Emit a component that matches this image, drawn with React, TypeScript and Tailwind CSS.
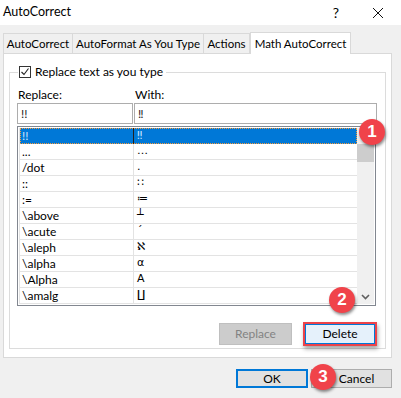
import React from 'react';

const rows: { k: string; v: string }[] = [
  { k: '!!', v: '‼' },
  { k: '...', v: '…' },
  { k: '/dot', v: '.' },
  { k: '::', v: '∷' },
  { k: ':=', v: '≔' },
  { k: '\\above', v: '┴' },
  { k: '\\acute', v: '´' },
  { k: '\\aleph', v: 'ℵ' },
  { k: '\\alpha', v: 'α' },
  { k: '\\Alpha', v: 'Α' },
  { k: '\\amalg', v: '∐' },
];

const Badge = ({ n, className }: { n: number; className: string }) => (
  <div
    className={`absolute w-[26px] h-[26px] rounded-full bg-[#f0434a] text-white text-[17px] font-bold flex items-center justify-center shadow-[1px_2px_3px_rgba(0,0,0,0.45)] ${className}`}
    style={{ fontFamily: '"Liberation Sans", Arial, sans-serif' }}
  >
    {n}
  </div>
);

export default function App() {
  return (
    <div
      className="relative w-[401px] h-[398px] bg-[#f0f0f0] overflow-hidden text-[12px] text-black"
      style={{ fontFamily: 'Lato, "Noto Sans", sans-serif' }}
    >
      {/* title bar */}
      <div className="h-[25px] bg-white flex items-center pl-[3px] pr-[17px]">
        <span className="text-[12.5px] flex-1">AutoCorrect</span>
        <span className="text-[14px] mr-[33px]">?</span>
        <svg width="12" height="12" viewBox="0 0 12 12">
          <path d="M1 1 L11 11 M11 1 L1 11" stroke="#111" strokeWidth="1" />
        </svg>
      </div>

      {/* tabs */}
      <div className="flex items-end pl-[3px] mt-[7px] h-[21px] text-[11.5px] whitespace-nowrap">
        <div className="w-[70px] h-[20px] border border-[#d9d9d9] border-b-0 bg-[#f0f0f0] flex items-center justify-center">AutoCorrect</div>
        <div className="w-[131px] h-[20px] border border-[#d9d9d9] border-l-0 border-b-0 bg-[#f0f0f0] flex items-center justify-center">AutoFormat As You Type</div>
        <div className="w-[46px] h-[20px] border border-[#d9d9d9] border-l-0 border-b-0 bg-[#f0f0f0] flex items-center justify-center">Actions</div>
        <div className="relative z-10 w-[101px] h-[22px] -mb-px border border-[#d9d9d9] border-b-0 bg-white flex items-center justify-center">Math AutoCorrect</div>
      </div>

      {/* panel */}
      <div className="ml-[3px] w-[389px] h-[305px] bg-white border border-[#d9d9d9] pt-[18px] px-[5px]">
        <div className="relative h-[277px] border border-[#dcdcdc] px-[7px]">
          <div className="absolute -top-[10px] left-[8px] flex items-center bg-white pr-[3px] pl-[1px]">
            <div className="w-[12px] h-[12px] border border-[#333] flex items-center justify-center mr-[4px]">
              <svg width="10" height="10" viewBox="0 0 10 10">
                <path d="M1.5 5 L4 7.5 L8.5 1.5" stroke="#222" strokeWidth="1.1" fill="none" />
              </svg>
            </div>
            <span>Replace text as you type</span>
          </div>

          <div className="flex mt-[14px] h-[16px] items-center">
            <div className="w-[118px] pl-[1px]">Replace:</div>
            <div>With:</div>
          </div>

          <div className="flex gap-[1px]">
            <div className="w-[116px] h-[21px] border border-[#adadad] flex items-center pl-[3px] text-[#1a1a1a]">!!</div>
            <div className="w-[243px] h-[21px] border border-[#adadad] flex items-center pl-[3px] text-[#1a1a1a]">‼</div>
          </div>

          {/* list */}
          <div className="mt-[2px] w-[359px] h-[180px] border border-[#828790] flex p-px">
            <div className="w-[338px] border-l border-[#e3e3e3]">
              {rows.map((r, i) => (
                <div
                  key={r.k}
                  className={`flex h-[16px] items-center ${
                    i === 0 ? 'bg-[#0078d7] text-[#cfe6ff] outline-1 outline-dotted outline-[#f59a3a] -outline-offset-1' : 'border-b border-[#e3e3e3]'
                  }`}
                >
                  <div className={`w-[114px] pl-[2px] h-full flex items-center ${i === 0 ? 'border-r border-[#222]' : 'border-r border-[#e3e3e3]'}`}>{r.k}</div>
                  <div className="pl-[3px] h-full flex items-center" style={{ fontFamily: '"DejaVu Sans", Lato, sans-serif', fontSize: 11 }}>{r.v}</div>
                </div>
              ))}
            </div>
            <div className="flex-1 bg-[#f0f0f0] flex flex-col items-center">
              <div className="h-[16px]"></div>
              <div className="w-full h-[18px] bg-[#cdcdcd]"></div>
              <div className="flex-1"></div>
              <svg width="9" height="6" viewBox="0 0 9 6" className="mb-[4px]">
                <path d="M1 1 L4.5 4.5 L8 1" stroke="#606060" strokeWidth="1.6" fill="none" />
              </svg>
            </div>
          </div>

          <div className="flex justify-end gap-[11px] mt-[16px] pr-[1px]">
            <div className="w-[73px] h-[22px] mt-[1px] bg-[#cccccc] border border-[#bfbfbf] text-[#838383] flex items-center justify-center">Replace</div>
            <div className="w-[74px] h-[24px] border-2 border-[#ec4349] shadow-[1px_3px_4px_rgba(0,0,0,0.35)]">
              <div className="w-full h-full bg-[#e5f1fb] border border-[#0078d7] flex items-center justify-center">Delete</div>
            </div>
          </div>
        </div>
      </div>

      {/* footer buttons */}
      <div className="flex justify-end gap-[3px] pr-[9px] mt-[11px]">
        <div className="w-[72px] h-[19px] bg-[#e1e1e1] border-2 border-[#0078d7] flex items-center justify-center">OK</div>
        <div className="w-[81px] h-[19px] bg-[#e1e1e1] border border-[#adadad] flex items-center justify-center pl-[10px]">Cancel</div>
      </div>

      <Badge n={1} className="left-[359px] top-[119px]" />
      <Badge n={2} className="left-[329px] top-[287px]" />
      <Badge n={3} className="left-[310px] top-[364px]" />
    </div>
  );
}
